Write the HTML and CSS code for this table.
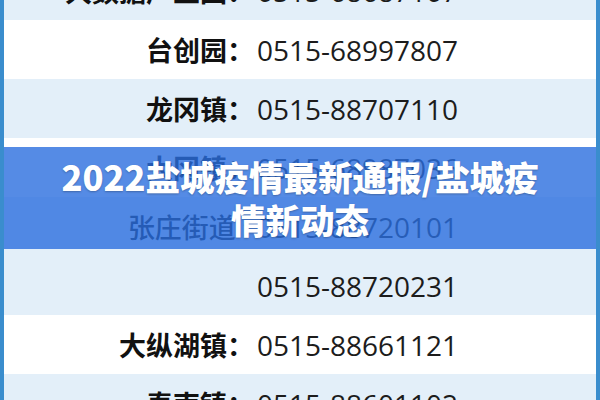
FILE: index.html
```html
<!DOCTYPE html>
<html lang="zh-CN">
<head>
    <meta charset="UTF-8">
    <meta name="viewport" content="width=device-width, initial-scale=1.0">
    <title>2022盐城疫情最新通报</title>
    <link rel="stylesheet" href="styles.css">
</head>
<body>

    <div class="sheet">
        <div class="list">
            <div class="row blue">
                <div class="label">大数据产业园：</div>
                <div class="phone">0515-68687107</div>
            </div>
            <div class="row">
                <div class="label">台创园：</div>
                <div class="phone">0515-68997807</div>
            </div>
            <div class="row blue">
                <div class="label">龙冈镇：</div>
                <div class="phone">0515-88707110</div>
            </div>
            <div class="row">
                <div class="label">大冈镇：</div>
                <div class="phone">0515-68987036</div>
            </div>
            <div class="row blue">
                <div class="label thin">张庄街道 :</div>
                <div class="phone">0515-88720101</div>
            </div>
            <div class="row blue">
                <div class="label"></div>
                <div class="phone">0515-88720231</div>
            </div>
            <div class="row">
                <div class="label">大纵湖镇：</div>
                <div class="phone">0515-88661121</div>
            </div>
            <div class="row blue">
                <div class="label">秦南镇：</div>
                <div class="phone">0515-88601102</div>
            </div>
        </div>

        <div class="banner">
            <h1>2022盐城疫情最新通报/盐城疫<br>情新动态</h1>
        </div>
    </div>

</body>
</html>
```

FILE: styles.css
```css
*{
    margin: 0;
    padding: 0;
    box-sizing: border-box;
}

html, body {
    width: 600px;
    height: 400px;
    overflow: hidden;
}

body {
    background-color: #ffffff;
    font-family: "Noto Sans CJK SC", "Noto Sans", sans-serif;
}

.sheet{
    position: relative;
    height: 400px;
    border-left: 4px solid #3a8dcd;
    border-right: 4px solid #3a8dcd;
    overflow: hidden;
}

.list{
    margin-top: -39px;
}

.row{
    display: grid;
    grid-template-columns: 250px 1fr;
    align-items: center;
    height: 59px;
    background-color: #ffffff;
}

.row.blue{
    background-color: #e3eff9;
}

.label{
    text-align: right;
    font-size: 27px;
    font-weight: 700;
    color: #111111;
}

.label.thin{
    font-weight: 500;
    padding-right: 4px;
}

.phone{
    padding-left: 3px;
    font-family: "Open Sans", "Noto Sans", sans-serif;
    font-size: 28px;
    color: #1c1c1c;
}

/* title band over the table */
.banner{
    position: absolute;
    left: -4px;
    right: -4px;
    top: 147px;
    height: 102px;
    background-color: rgba(42, 110, 222, 0.8);
    display: flex;
    align-items: center;
    justify-content: center;
    padding: 0 30px;
}

.banner h1{
    color: #ffffff;
    font-size: 34.5px;
    font-weight: 900;
    line-height: 43px;
    text-align: center;
    text-shadow: 0 1px 2px rgba(0, 0, 0, 0.25);
}
```
